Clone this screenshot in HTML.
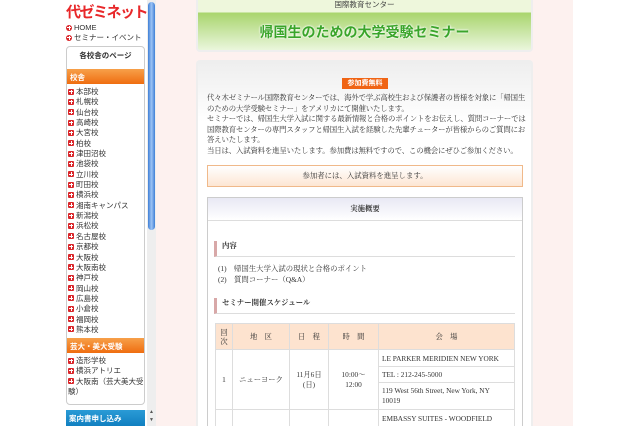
<!DOCTYPE html>
<html style="overflow:hidden;height:426px"><head><meta charset="utf-8"><style>
*{margin:0;padding:0;box-sizing:border-box}
body{width:640px;height:426px;overflow:hidden;background:#fff;font-family:"Liberation Serif","Noto Serif CJK SC",serif;color:#333;position:relative}
.a{position:absolute}
.sans{font-family:"Liberation Sans","Noto Sans CJK JP",sans-serif}
.pink{left:156px;top:0;width:417px;height:426px;background:#fdf1ef}
.logo{left:66px;top:1px;font-size:15px;font-weight:bold;color:#e8282a;letter-spacing:-1.5px;font-family:"Liberation Sans","Noto Sans CJK JP",sans-serif;white-space:nowrap}
.nav{left:66px;font-size:7.5px;color:#333}
.ic{display:inline-block;width:6px;height:6px;background:#d9262a;border-radius:1px;margin-right:2px;vertical-align:-0.5px;position:relative}
.ic:after{content:"";position:absolute;left:1px;top:2.5px;width:4px;height:1px;background:#fff}
.ic:before{content:"";position:absolute;left:2.5px;top:1px;width:1px;height:4px;background:#fff}
.rc{border-radius:50%}
.box{left:66px;top:46px;width:79px;height:359px;border:1px solid #ccc;border-radius:4px;background:#fff}
.oh{left:67px;width:77px;height:15px;background:linear-gradient(#f7a04a,#ef6d10);color:#fff;font-size:7.5px;font-weight:bold;padding:3px 3px}
.it{left:68px;font-size:7.5px;line-height:10.35px}
.sb{left:147px;top:0;width:9px;height:426px;background:#eee}
.thumb{left:148px;top:2px;width:7px;height:228px;border-radius:4px;background:linear-gradient(90deg,#3f7fd6,#9cc4f5,#3f7fd6)}
.green{left:196px;top:-4px;width:337px;height:56px;border:2px solid #eee;border-radius:4px;background:linear-gradient(#eef7dc 0,#eef7dc 14px,#a9d56e 15px,#eaf6dc 100%)}
.panel{left:196px;top:60px;width:337px;height:366px;border:2px solid #eee;border-bottom:none;border-radius:4px 4px 0 0;background:linear-gradient(#eeeeee,#fff 60px)}
.p{font-size:7.4px;line-height:10.6px}
table{border-collapse:collapse;font-size:7.3px}
td{border:1px solid #ddd;text-align:center;vertical-align:middle;background:#fff}
th{border:1px solid #ddd;background:#fde3cf;font-weight:normal;height:26px}
</style></head><body>
<div class="a pink"></div>
<div class="a logo">代ゼミネット</div>
<div class="a nav sans" style="top:23px"><span class="ic rc"></span>HOME</div>
<div class="a nav sans" style="top:32px"><span class="ic rc"></span>セミナー・イベント</div>
<div class="a box"></div>
<div class="a sans" style="left:67px;top:50px;width:77px;text-align:center;font-size:7.5px;font-weight:bold">各校舎のページ</div>
<div class="a oh sans" style="top:69px">校舎</div>
<div class="a it sans" style="top:87px">
<div><span class="ic"></span>本部校</div><div><span class="ic"></span>札幌校</div><div><span class="ic"></span>仙台校</div><div><span class="ic"></span>高崎校</div><div><span class="ic"></span>大宮校</div><div><span class="ic"></span>柏校</div><div><span class="ic"></span>津田沼校</div><div><span class="ic"></span>池袋校</div><div><span class="ic"></span>立川校</div><div><span class="ic"></span>町田校</div><div><span class="ic"></span>横浜校</div><div><span class="ic"></span>湘南キャンパス</div><div><span class="ic"></span>新潟校</div><div><span class="ic"></span>浜松校</div><div><span class="ic"></span>名古屋校</div><div><span class="ic"></span>京都校</div><div><span class="ic"></span>大阪校</div><div><span class="ic"></span>大阪南校</div><div><span class="ic"></span>神戸校</div><div><span class="ic"></span>岡山校</div><div><span class="ic"></span>広島校</div><div><span class="ic"></span>小倉校</div><div><span class="ic"></span>福岡校</div><div><span class="ic"></span>熊本校</div></div>
<div class="a oh sans" style="top:338px">芸大・美大受験</div>
<div class="a it sans" style="top:356px;width:76px">
<div><span class="ic"></span>造形学校</div><div><span class="ic"></span>横浜アトリエ</div><div><span class="ic"></span>大阪南（芸大美大受験）</div></div>
<div class="a sans" style="left:66px;top:410px;width:79px;height:16px;background:linear-gradient(#2a9bd6,#117fc0);color:#fff;font-size:7.5px;font-weight:bold;padding:3px 3px">案内書申し込み</div>
<div class="a sb"></div>
<div class="a thumb"></div>
<div class="a" style="left:149px;top:410px;font-size:5px;color:#555">▲</div>
<div class="a" style="left:149px;top:418px;font-size:5px;color:#555">▼</div>

<div class="a green"></div>
<div class="a sans" style="left:196px;top:-1px;width:337px;text-align:center;font-size:7.5px;color:#444">国際教育センター</div>
<div class="a sans" style="left:196px;top:22px;width:337px;text-align:center;font-size:14px;font-weight:bold;color:#3aa52a;text-shadow:0 0 2px #fff,0 0 2px #fff">帰国生のための大学受験セミナー</div>

<div class="a panel"></div>
<div class="a sans" style="left:342px;top:78px;width:46px;height:11px;background:#f06414;color:#fff;font-size:7px;font-weight:bold;text-align:center;line-height:11px">参加費無料</div>
<div class="a p" style="left:207px;top:93px;width:322px;letter-spacing:-0.15px">代々木ゼミナール国際教育センターでは、海外で学ぶ高校生および保護者の皆様を対象に「帰国生のための大学受験セミナー」をアメリカにて開催いたします。<br>セミナーでは、帰国生大学入試に関する最新情報と合格のポイントをお伝えし、質問コーナーでは国際教育センターの専門スタッフと帰国生入試を経験した先輩チューターが皆様からのご質問にお答えいたします。<br>当日は、入試資料を進呈いたします。参加費は無料ですので、この機会にぜひご参加ください。</div>
<div class="a p" style="left:207px;top:165px;width:316px;height:22px;border:1px solid #f0b98a;background:linear-gradient(#fff,#fde6d3);text-align:center;line-height:20px">参加者には、入試資料を進呈します。</div>
<div class="a" style="left:207px;top:197px;width:316px;height:240px;border:1px solid #ccc;background:#fff"></div>
<div class="a p" style="left:208px;top:198px;width:314px;height:23px;background:linear-gradient(#e8e8f4,#fff);border-bottom:1px solid #ddd;text-align:center;line-height:22px;font-weight:bold">実施概要</div>
<div class="a p" style="left:214px;top:241px;width:301px;height:16px;border-left:3px solid #d8a8a8;border-bottom:1px solid #ddd;padding-left:5px;font-weight:bold">内容</div>
<div class="a p" style="left:218px;top:264px">(1)　帰国生大学入試の現状と合格のポイント<br>(2)　質問コーナー（Q&amp;A）</div>
<div class="a p" style="left:214px;top:298px;width:301px;height:16px;border-left:3px solid #d8a8a8;border-bottom:1px solid #ddd;padding-left:5px;font-weight:bold">セミナー開催スケジュール</div>
<table class="a" style="left:215px;top:323px;width:300px">
<tr><th style="width:17px;line-height:9px">回<br>次</th><th style="width:57px">地　区</th><th style="width:39px">日　程</th><th style="width:50px">時　間</th><th>会　場</th></tr>
<tr><td rowspan="3">1</td><td rowspan="3">ニューヨーク</td><td rowspan="3">11月6日<br>(日)</td><td rowspan="3">10:00〜<br>12:00</td><td style="text-align:left;padding:3px;height:17px">LE PARKER MERIDIEN NEW YORK</td></tr>
<tr><td style="text-align:left;padding:3px;height:16px">TEL : 212-245-5000</td></tr>
<tr><td style="text-align:left;padding:3px;height:27px;line-height:10px">119 West 56th Street, New York, NY<br>10019</td></tr>
<tr><td></td><td></td><td></td><td></td><td style="text-align:left;padding:3px;height:17px">EMBASSY SUITES - WOODFIELD</td></tr>
</table>
</body></html>
